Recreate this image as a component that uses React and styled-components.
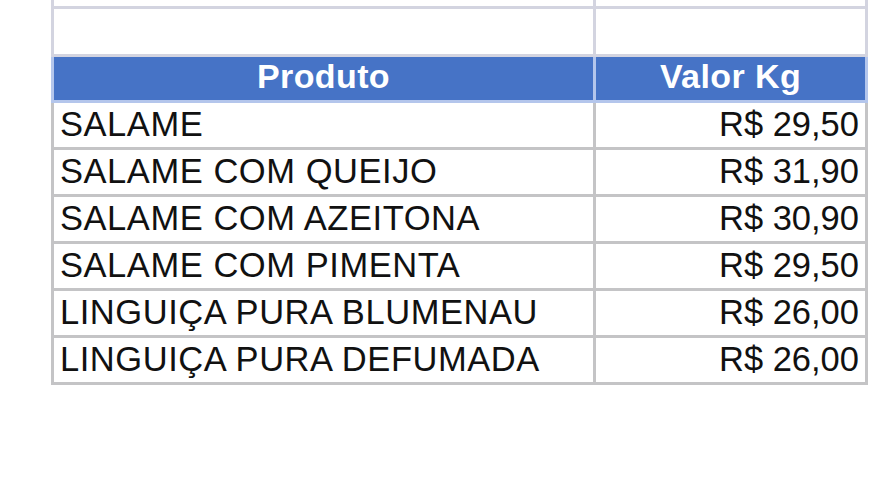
import React from 'react';
import styled, { createGlobalStyle } from 'styled-components';

const GRID = '#c4c4c6';
const LAVENDER = '#d3d4e0';
const HEADER_LINE = '#b4c6ec';
const BLUE = '#4673c6';

const GlobalStyle = createGlobalStyle`
  html, body {
    margin: 0;
    padding: 0;
    background: #ffffff;
  }
  body {
    font-family: "Liberation Sans", Arial, sans-serif;
    overflow: hidden;
  }
`;

const Page = styled.div`
  width: 887px;
  height: 477px;
  background: #ffffff;
`;

const Sheet = styled.div`
  display: flex;
  flex-direction: column;
  margin-left: 51px;
  width: 817px;
`;

const Row = styled.div`
  display: grid;
  grid-template-columns: 542px 272px;
  height: ${(p) => p.$height}px;
  border-left: 3px solid ${(p) => p.$line};
  background: ${(p) => p.$fill || 'transparent'};
`;

const Cell = styled.div`
  box-sizing: border-box;
  border-right: 3px solid ${(p) => p.$line};
  border-bottom: 3px solid ${(p) => p.$line};
  overflow: hidden;
  white-space: nowrap;
`;

const HeadCell = styled(Cell)`
  color: #ffffff;
  font-weight: 700;
  font-size: 34px;
  line-height: 39px;
  letter-spacing: 0.4px;
  text-align: center;
`;

const DataCell = styled(Cell)`
  color: #111111;
  font-size: 34.5px;
  line-height: 42px;
  padding: ${(p) => (p.$right ? '0 6px 0 0' : '0 0 0 6px')};
  letter-spacing: ${(p) => (p.$right ? '0' : '0.55px')};
  text-align: ${(p) => (p.$right ? 'right' : 'left')};
`;

const products = [
  ['SALAME', 'R$ 29,50'],
  ['SALAME COM QUEIJO', 'R$ 31,90'],
  ['SALAME COM AZEITONA', 'R$ 30,90'],
  ['SALAME COM PIMENTA', 'R$ 29,50'],
  ['LINGUIÇA PURA BLUMENAU', 'R$ 26,00'],
  ['LINGUIÇA PURA DEFUMADA', 'R$ 26,00'],
];

const App = () => (
  <Page>
    <GlobalStyle />
    <Sheet>
      <Row $height={9} $line={LAVENDER}>
        <Cell $line={LAVENDER} />
        <Cell $line={LAVENDER} />
      </Row>
      <Row $height={48} $line={LAVENDER}>
        <Cell $line={LAVENDER} />
        <Cell $line={LAVENDER} />
      </Row>
      <Row $height={46} $line={HEADER_LINE} $fill={BLUE}>
        <HeadCell $line={HEADER_LINE}>Produto</HeadCell>
        <HeadCell $line={HEADER_LINE}>Valor Kg</HeadCell>
      </Row>
      {products.map(([name, price]) => (
        <Row key={name} $height={47} $line={GRID}>
          <DataCell $line={GRID}>{name}</DataCell>
          <DataCell $line={GRID} $right>
            {price}
          </DataCell>
        </Row>
      ))}
    </Sheet>
  </Page>
);

export default App;
